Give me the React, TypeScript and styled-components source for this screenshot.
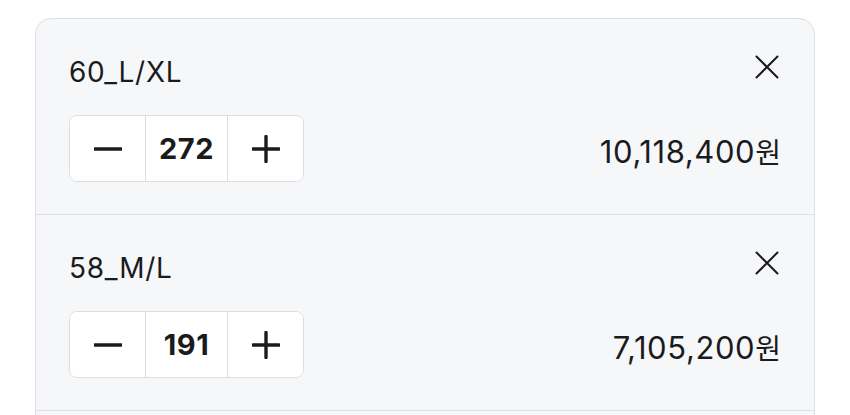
import React, { FC } from "react";
import styled, { createGlobalStyle } from "styled-components";

type Option = {
  id: string;
  label: string;
  quantity: number;
  unitPrice: number;
};

const GlobalStyle = createGlobalStyle`
  html, body {
    margin: 0;
    padding: 0;
    background: #ffffff;
    overflow: hidden;
  }
  body {
    font-family: Inter, "Noto Sans CJK KR", "Noto Sans", sans-serif;
    color: #1b1b1d;
  }
`;

const Page = styled.div`
  padding: 18px 35px 0 35px;
`;

const Card = styled.div`
  background: #f6f7f9;
  border: 1.5px solid #dfe0e4;
  border-radius: 16px;
  padding-bottom: 40px;
  overflow: hidden;
`;

const Row = styled.div`
  display: flex;
  flex-direction: column;
  gap: 28px;
  padding: 38px 33px 32px 33px;
  border-bottom: 1.5px solid #dfe0e4;
`;

const Header = styled.div`
  display: flex;
  align-items: center;
  justify-content: space-between;
  height: 30px;
`;

const Title = styled.span`
  font-size: 28px;
  line-height: 30px;
  font-weight: 400;
  letter-spacing: 0.7px;
`;

const CloseButton = styled.button`
  display: flex;
  align-items: center;
  justify-content: center;
  width: 32px;
  height: 32px;
  margin: -10px -2px 0 0;
  padding: 0;
  border: none;
  background: transparent;
  color: #1b1b1d;
  cursor: pointer;
`;

const Body = styled.div`
  display: flex;
  align-items: center;
  justify-content: space-between;
`;

const Stepper = styled.div`
  display: flex;
  height: 65px;
  background: #ffffff;
  border: 1.5px solid #dcdde1;
  border-radius: 8px;
  overflow: hidden;
`;

const StepButton = styled.button`
  display: flex;
  align-items: center;
  justify-content: center;
  width: 75px;
  padding: 0;
  border: none;
  background: #ffffff;
  color: #1b1b1d;
  cursor: pointer;
`;

const Count = styled.span`
  display: flex;
  align-items: center;
  justify-content: center;
  width: 81px;
  border-left: 1.5px solid #dcdde1;
  border-right: 1.5px solid #dcdde1;
  font-size: 29px;
  font-weight: 700;
  letter-spacing: 0.6px;
`;

const Price = styled.span`
  font-size: 31px;
  font-weight: 400;
  letter-spacing: 0.6px;
  margin-top: 5px;
`;

const Won = styled.span`
  font-size: 28px;
  letter-spacing: 0;
`;

const CloseIcon = () => (
  <svg width="24" height="24" viewBox="0 0 24 24" fill="none">
    <path d="M1.5 1.5 22.5 22.5M22.5 1.5 1.5 22.5" stroke="currentColor" strokeWidth="2" strokeLinecap="round" />
  </svg>
);

const MinusIcon = () => (
  <svg width="28" height="28" viewBox="0 0 28 28" fill="none">
    <path d="M1 14h26" stroke="currentColor" strokeWidth="3.4" strokeLinecap="round" />
  </svg>
);

const PlusIcon = () => (
  <svg width="28" height="28" viewBox="0 0 28 28" fill="none">
    <path d="M1 14h26M14 1.5v25" stroke="currentColor" strokeWidth="3.4" strokeLinecap="round" />
  </svg>
);

const formatPrice = (value: number) => value.toLocaleString("en-US");

const OptionRow: FC<{ option: Option }> = ({ option }) => (
  <Row>
    <Header>
      <Title>{option.label}</Title>
      <CloseButton aria-label="삭제">
        <CloseIcon />
      </CloseButton>
    </Header>
    <Body>
      <Stepper>
        <StepButton aria-label="수량 감소">
          <MinusIcon />
        </StepButton>
        <Count>{option.quantity}</Count>
        <StepButton aria-label="수량 증가">
          <PlusIcon />
        </StepButton>
      </Stepper>
      <Price>
        {formatPrice(option.quantity * option.unitPrice)}
        <Won>원</Won>
      </Price>
    </Body>
  </Row>
);

const options: Option[] = [
  { id: "60", label: "60_L/XL", quantity: 272, unitPrice: 37200 },
  { id: "58", label: "58_M/L", quantity: 191, unitPrice: 37200 }
];

const App: FC = () => (
  <>
    <GlobalStyle />
    <Page>
      <Card>
        {options.map(option => (
          <OptionRow key={option.id} option={option} />
        ))}
      </Card>
    </Page>
  </>
);

export default App;
